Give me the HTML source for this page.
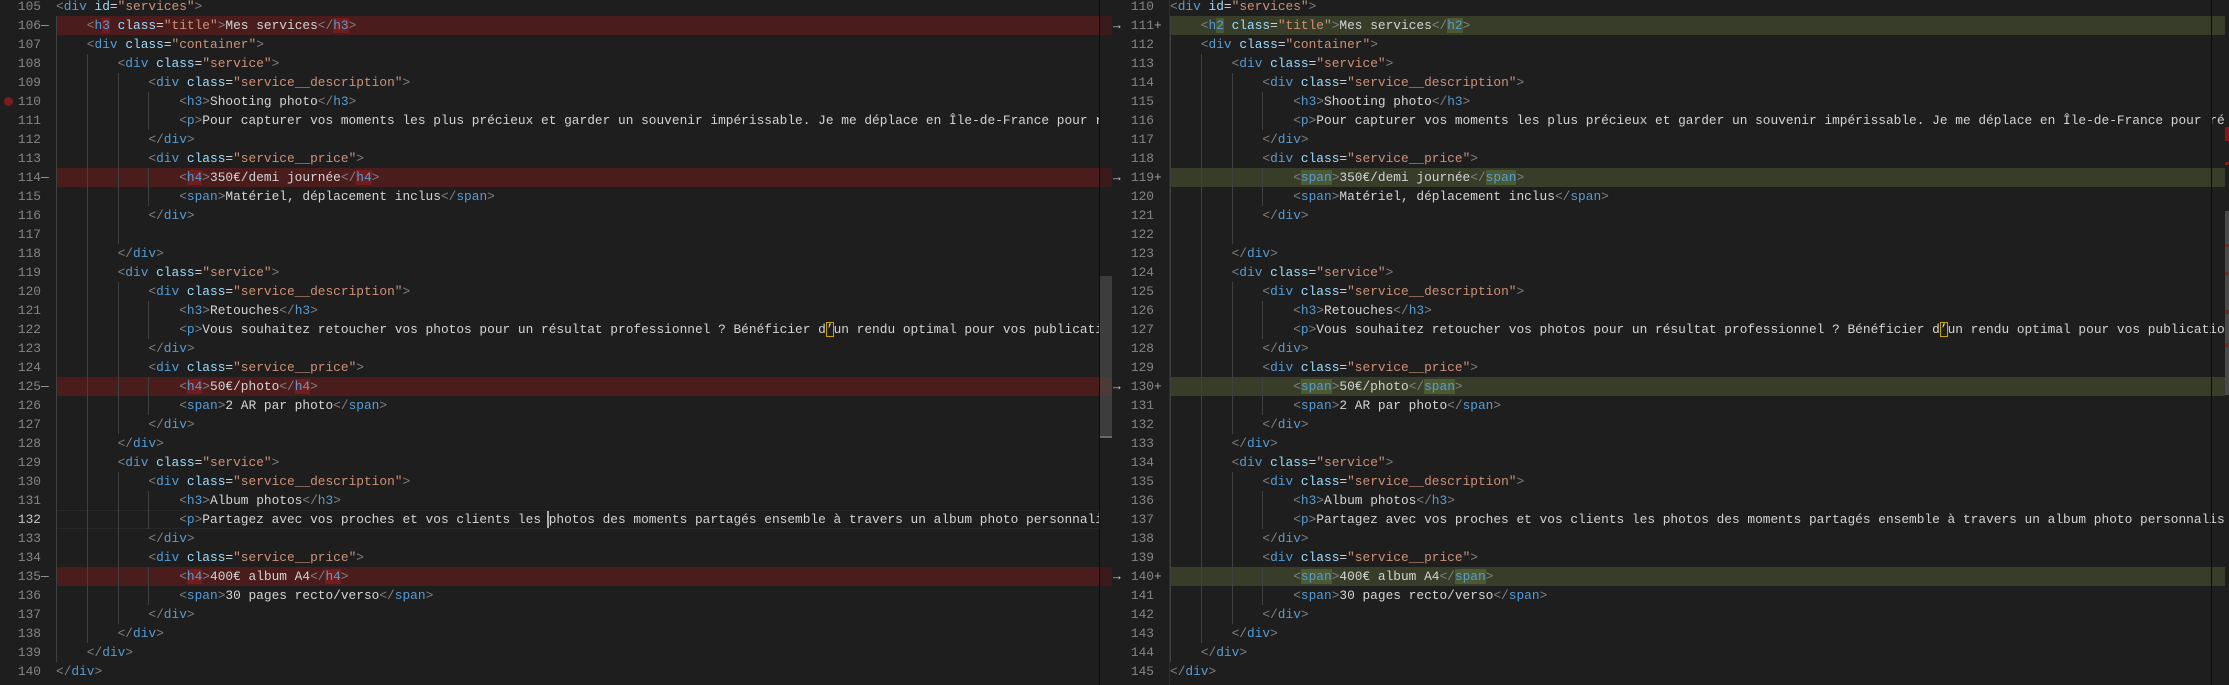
<!DOCTYPE html>
<html><head><meta charset="utf-8"><style>
html,body{margin:0;padding:0;background:#1e1e1e;width:2229px;height:685px;overflow:hidden}
body{position:relative;font-family:"Liberation Mono",monospace;font-size:12.83px;color:#d4d4d4}
.pane{position:absolute;top:0;height:685px;overflow:hidden}
.l{position:absolute;left:0;right:0;height:19px;line-height:19px;white-space:pre}
.num{position:absolute;top:0;color:#858585;text-align:right}
.code{position:absolute;top:0;white-space:pre}
i{display:inline-block;width:30.8px;height:19px;vertical-align:top;box-shadow:inset 1px 0 0 #404040}
.p{color:#808080}.n{color:#569cd6}.a{color:#9cdcfe}.s{color:#ce9178}
.del{background:#4b1c1c}
.ins{background:#373d29}
.del u{text-decoration:none;background:#6f1d1d}
.ins u{text-decoration:none;background:#4b5a32}
.mk{position:absolute;top:0;color:#a0a0a0}
.q{outline:1px solid #c5a300;outline-offset:-1px}
#L .num{left:0;width:41px}
#L .code{left:56px}
#R .num{left:0;width:42px}
#R .code{left:58px}
</style></head><body>
<div class="pane" id="L" style="left:0;width:1099px">
<div class="l" style="top:-3px"><span class="num">105</span><span class="code"><span class="p">&lt;</span><span class="n">div</span> <span class="a">id</span>=<span class="s">"services"</span><span class="p">&gt;</span></span></div>
<div class="l" style="top:16px"><div class="del" style="position:absolute;left:56px;right:0;top:0;height:19px"></div><span class="num">106</span><span class="mk" style="left:41px">—</span><span class="code del"><i></i><span class="p">&lt;</span><span class="n">h<u>3</u></span> <span class="a">class</span>=<span class="s">"title"</span><span class="p">&gt;</span>Mes services<span class="p">&lt;/</span><span class="n"><u>h3</u></span><span class="p">&gt;</span></span></div>
<div class="l" style="top:35px"><span class="num">107</span><span class="code"><i></i><span class="p">&lt;</span><span class="n">div</span> <span class="a">class</span>=<span class="s">"container"</span><span class="p">&gt;</span></span></div>
<div class="l" style="top:54px"><span class="num">108</span><span class="code"><i></i><i></i><span class="p">&lt;</span><span class="n">div</span> <span class="a">class</span>=<span class="s">"service"</span><span class="p">&gt;</span></span></div>
<div class="l" style="top:73px"><span class="num">109</span><span class="code"><i></i><i></i><i></i><span class="p">&lt;</span><span class="n">div</span> <span class="a">class</span>=<span class="s">"service__description"</span><span class="p">&gt;</span></span></div>
<div class="l" style="top:92px"><span style="position:absolute;left:4px;top:5px;width:9px;height:9px;border-radius:50%;background:#7a1d1d"></span><span class="num">110</span><span class="code"><i></i><i></i><i></i><i></i><span class="p">&lt;</span><span class="n">h3</span><span class="p">&gt;</span>Shooting photo<span class="p">&lt;/</span><span class="n">h3</span><span class="p">&gt;</span></span></div>
<div class="l" style="top:111px"><span class="num">111</span><span class="code"><i></i><i></i><i></i><i></i><span class="p">&lt;</span><span class="n">p</span><span class="p">&gt;</span>Pour capturer vos moments les plus précieux et garder un souvenir impérissable. Je me déplace en Île-de-France pour réaliser vos photos.</span></div>
<div class="l" style="top:130px"><span class="num">112</span><span class="code"><i></i><i></i><i></i><span class="p">&lt;/</span><span class="n">div</span><span class="p">&gt;</span></span></div>
<div class="l" style="top:149px"><span class="num">113</span><span class="code"><i></i><i></i><i></i><span class="p">&lt;</span><span class="n">div</span> <span class="a">class</span>=<span class="s">"service__price"</span><span class="p">&gt;</span></span></div>
<div class="l" style="top:168px"><div class="del" style="position:absolute;left:56px;right:0;top:0;height:19px"></div><span class="num">114</span><span class="mk" style="left:41px">—</span><span class="code del"><i></i><i></i><i></i><i></i><span class="p">&lt;</span><span class="n"><u>h4</u></span><span class="p">&gt;</span>350€/demi journée<span class="p">&lt;/</span><span class="n"><u>h4</u></span><span class="p">&gt;</span></span></div>
<div class="l" style="top:187px"><span class="num">115</span><span class="code"><i></i><i></i><i></i><i></i><span class="p">&lt;</span><span class="n">span</span><span class="p">&gt;</span>Matériel, déplacement inclus<span class="p">&lt;/</span><span class="n">span</span><span class="p">&gt;</span></span></div>
<div class="l" style="top:206px"><span class="num">116</span><span class="code"><i></i><i></i><i></i><span class="p">&lt;/</span><span class="n">div</span><span class="p">&gt;</span></span></div>
<div class="l" style="top:225px"><span class="num">117</span><span class="code"><i></i><i></i><i></i></span></div>
<div class="l" style="top:244px"><span class="num">118</span><span class="code"><i></i><i></i><span class="p">&lt;/</span><span class="n">div</span><span class="p">&gt;</span></span></div>
<div class="l" style="top:263px"><span class="num">119</span><span class="code"><i></i><i></i><span class="p">&lt;</span><span class="n">div</span> <span class="a">class</span>=<span class="s">"service"</span><span class="p">&gt;</span></span></div>
<div class="l" style="top:282px"><span class="num">120</span><span class="code"><i></i><i></i><i></i><span class="p">&lt;</span><span class="n">div</span> <span class="a">class</span>=<span class="s">"service__description"</span><span class="p">&gt;</span></span></div>
<div class="l" style="top:301px"><span class="num">121</span><span class="code"><i></i><i></i><i></i><i></i><span class="p">&lt;</span><span class="n">h3</span><span class="p">&gt;</span>Retouches<span class="p">&lt;/</span><span class="n">h3</span><span class="p">&gt;</span></span></div>
<div class="l" style="top:320px"><span class="num">122</span><span class="code"><i></i><i></i><i></i><i></i><span class="p">&lt;</span><span class="n">p</span><span class="p">&gt;</span>Vous souhaitez retoucher vos photos pour un résultat professionnel ? Bénéficier d<span class="q">’</span>un rendu optimal pour vos publications.</span></div>
<div class="l" style="top:339px"><span class="num">123</span><span class="code"><i></i><i></i><i></i><span class="p">&lt;/</span><span class="n">div</span><span class="p">&gt;</span></span></div>
<div class="l" style="top:358px"><span class="num">124</span><span class="code"><i></i><i></i><i></i><span class="p">&lt;</span><span class="n">div</span> <span class="a">class</span>=<span class="s">"service__price"</span><span class="p">&gt;</span></span></div>
<div class="l" style="top:377px"><div class="del" style="position:absolute;left:56px;right:0;top:0;height:19px"></div><span class="num">125</span><span class="mk" style="left:41px">—</span><span class="code del"><i></i><i></i><i></i><i></i><span class="p">&lt;</span><span class="n"><u>h4</u></span><span class="p">&gt;</span>50€/photo<span class="p">&lt;/</span><span class="n"><u>h4</u></span><span class="p">&gt;</span></span></div>
<div class="l" style="top:396px"><span class="num">126</span><span class="code"><i></i><i></i><i></i><i></i><span class="p">&lt;</span><span class="n">span</span><span class="p">&gt;</span>2 AR par photo<span class="p">&lt;/</span><span class="n">span</span><span class="p">&gt;</span></span></div>
<div class="l" style="top:415px"><span class="num">127</span><span class="code"><i></i><i></i><i></i><span class="p">&lt;/</span><span class="n">div</span><span class="p">&gt;</span></span></div>
<div class="l" style="top:434px"><span class="num">128</span><span class="code"><i></i><i></i><span class="p">&lt;/</span><span class="n">div</span><span class="p">&gt;</span></span></div>
<div class="l" style="top:453px"><span class="num">129</span><span class="code"><i></i><i></i><span class="p">&lt;</span><span class="n">div</span> <span class="a">class</span>=<span class="s">"service"</span><span class="p">&gt;</span></span></div>
<div class="l" style="top:472px"><span class="num">130</span><span class="code"><i></i><i></i><i></i><span class="p">&lt;</span><span class="n">div</span> <span class="a">class</span>=<span class="s">"service__description"</span><span class="p">&gt;</span></span></div>
<div class="l" style="top:491px"><span class="num">131</span><span class="code"><i></i><i></i><i></i><i></i><span class="p">&lt;</span><span class="n">h3</span><span class="p">&gt;</span>Album photos<span class="p">&lt;/</span><span class="n">h3</span><span class="p">&gt;</span></span></div>
<div class="l" style="top:510px"><div style="position:absolute;left:56px;right:0;top:0;height:17px;border:1px solid #282828"></div><span class="num" style="color:#c6c6c6">132</span><span class="code"><i></i><i></i><i></i><i></i><span class="p">&lt;</span><span class="n">p</span><span class="p">&gt;</span>Partagez avec vos proches et vos clients les photos des moments partagés ensemble à travers un album photo personnalisé.</span><span style="position:absolute;left:547px;top:1px;width:2px;height:17px;background:#aeafad"></span></div>
<div class="l" style="top:529px"><span class="num">133</span><span class="code"><i></i><i></i><i></i><span class="p">&lt;/</span><span class="n">div</span><span class="p">&gt;</span></span></div>
<div class="l" style="top:548px"><span class="num">134</span><span class="code"><i></i><i></i><i></i><span class="p">&lt;</span><span class="n">div</span> <span class="a">class</span>=<span class="s">"service__price"</span><span class="p">&gt;</span></span></div>
<div class="l" style="top:567px"><div class="del" style="position:absolute;left:56px;right:0;top:0;height:19px"></div><span class="num">135</span><span class="mk" style="left:41px">—</span><span class="code del"><i></i><i></i><i></i><i></i><span class="p">&lt;</span><span class="n"><u>h4</u></span><span class="p">&gt;</span>400€ album A4<span class="p">&lt;/</span><span class="n"><u>h4</u></span><span class="p">&gt;</span></span></div>
<div class="l" style="top:586px"><span class="num">136</span><span class="code"><i></i><i></i><i></i><i></i><span class="p">&lt;</span><span class="n">span</span><span class="p">&gt;</span>30 pages recto/verso<span class="p">&lt;/</span><span class="n">span</span><span class="p">&gt;</span></span></div>
<div class="l" style="top:605px"><span class="num">137</span><span class="code"><i></i><i></i><i></i><span class="p">&lt;/</span><span class="n">div</span><span class="p">&gt;</span></span></div>
<div class="l" style="top:624px"><span class="num">138</span><span class="code"><i></i><i></i><span class="p">&lt;/</span><span class="n">div</span><span class="p">&gt;</span></span></div>
<div class="l" style="top:643px"><span class="num">139</span><span class="code"><i></i><span class="p">&lt;/</span><span class="n">div</span><span class="p">&gt;</span></span></div>
<div class="l" style="top:662px"><span class="num">140</span><span class="code"><span class="p">&lt;/</span><span class="n">div</span><span class="p">&gt;</span></span></div>
</div>
<!-- left scrollbar / divider -->
<div style="position:absolute;left:1099px;top:0;width:1px;height:685px;background:#0c0c0c"></div>
<div style="position:absolute;left:1100px;top:16px;width:12px;height:19px;background:#3a1a1a"></div>
<div style="position:absolute;left:1100px;top:168px;width:12px;height:19px;background:#3a1a1a"></div>
<div style="position:absolute;left:1100px;top:377px;width:12px;height:19px;background:#3a1a1a"></div>
<div style="position:absolute;left:1100px;top:567px;width:12px;height:19px;background:#3a1a1a"></div>
<div style="position:absolute;left:1100px;top:276px;width:12px;height:161px;background:rgba(121,121,121,0.35)"></div>
<div style="position:absolute;left:1100px;top:436px;width:12px;height:2px;background:#6a6a6a"></div>

<div class="pane" id="R" style="left:1112px;width:1113px">
<div class="l" style="top:-3px"><span class="num">110</span><span class="code"><span class="p">&lt;</span><span class="n">div</span> <span class="a">id</span>=<span class="s">"services"</span><span class="p">&gt;</span></span></div>
<div class="l" style="top:16px"><div class="ins" style="position:absolute;left:58px;right:0;top:0;height:19px"></div><span class="mk" style="left:1px;color:#ccc">→</span><span class="num">111</span><span class="mk" style="left:42px">+</span><span class="code ins"><i></i><span class="p">&lt;</span><span class="n">h<u>2</u></span> <span class="a">class</span>=<span class="s">"title"</span><span class="p">&gt;</span>Mes services<span class="p">&lt;/</span><span class="n"><u>h2</u></span><span class="p">&gt;</span></span></div>
<div class="l" style="top:35px"><span class="num">112</span><span class="code"><i></i><span class="p">&lt;</span><span class="n">div</span> <span class="a">class</span>=<span class="s">"container"</span><span class="p">&gt;</span></span></div>
<div class="l" style="top:54px"><span class="num">113</span><span class="code"><i></i><i></i><span class="p">&lt;</span><span class="n">div</span> <span class="a">class</span>=<span class="s">"service"</span><span class="p">&gt;</span></span></div>
<div class="l" style="top:73px"><span class="num">114</span><span class="code"><i></i><i></i><i></i><span class="p">&lt;</span><span class="n">div</span> <span class="a">class</span>=<span class="s">"service__description"</span><span class="p">&gt;</span></span></div>
<div class="l" style="top:92px"><span class="num">115</span><span class="code"><i></i><i></i><i></i><i></i><span class="p">&lt;</span><span class="n">h3</span><span class="p">&gt;</span>Shooting photo<span class="p">&lt;/</span><span class="n">h3</span><span class="p">&gt;</span></span></div>
<div class="l" style="top:111px"><span class="num">116</span><span class="code"><i></i><i></i><i></i><i></i><span class="p">&lt;</span><span class="n">p</span><span class="p">&gt;</span>Pour capturer vos moments les plus précieux et garder un souvenir impérissable. Je me déplace en Île-de-France pour réaliser vos photos.</span></div>
<div class="l" style="top:130px"><span class="num">117</span><span class="code"><i></i><i></i><i></i><span class="p">&lt;/</span><span class="n">div</span><span class="p">&gt;</span></span></div>
<div class="l" style="top:149px"><span class="num">118</span><span class="code"><i></i><i></i><i></i><span class="p">&lt;</span><span class="n">div</span> <span class="a">class</span>=<span class="s">"service__price"</span><span class="p">&gt;</span></span></div>
<div class="l" style="top:168px"><div class="ins" style="position:absolute;left:58px;right:0;top:0;height:19px"></div><span class="mk" style="left:1px;color:#ccc">→</span><span class="num">119</span><span class="mk" style="left:42px">+</span><span class="code ins"><i></i><i></i><i></i><i></i><span class="p">&lt;</span><span class="n"><u>span</u></span><span class="p">&gt;</span>350€/demi journée<span class="p">&lt;/</span><span class="n"><u>span</u></span><span class="p">&gt;</span></span></div>
<div class="l" style="top:187px"><span class="num">120</span><span class="code"><i></i><i></i><i></i><i></i><span class="p">&lt;</span><span class="n">span</span><span class="p">&gt;</span>Matériel, déplacement inclus<span class="p">&lt;/</span><span class="n">span</span><span class="p">&gt;</span></span></div>
<div class="l" style="top:206px"><span class="num">121</span><span class="code"><i></i><i></i><i></i><span class="p">&lt;/</span><span class="n">div</span><span class="p">&gt;</span></span></div>
<div class="l" style="top:225px"><span class="num">122</span><span class="code"><i></i><i></i><i></i></span></div>
<div class="l" style="top:244px"><span class="num">123</span><span class="code"><i></i><i></i><span class="p">&lt;/</span><span class="n">div</span><span class="p">&gt;</span></span></div>
<div class="l" style="top:263px"><span class="num">124</span><span class="code"><i></i><i></i><span class="p">&lt;</span><span class="n">div</span> <span class="a">class</span>=<span class="s">"service"</span><span class="p">&gt;</span></span></div>
<div class="l" style="top:282px"><span class="num">125</span><span class="code"><i></i><i></i><i></i><span class="p">&lt;</span><span class="n">div</span> <span class="a">class</span>=<span class="s">"service__description"</span><span class="p">&gt;</span></span></div>
<div class="l" style="top:301px"><span class="num">126</span><span class="code"><i></i><i></i><i></i><i></i><span class="p">&lt;</span><span class="n">h3</span><span class="p">&gt;</span>Retouches<span class="p">&lt;/</span><span class="n">h3</span><span class="p">&gt;</span></span></div>
<div class="l" style="top:320px"><span class="num">127</span><span class="code"><i></i><i></i><i></i><i></i><span class="p">&lt;</span><span class="n">p</span><span class="p">&gt;</span>Vous souhaitez retoucher vos photos pour un résultat professionnel ? Bénéficier d<span class="q">’</span>un rendu optimal pour vos publications.</span></div>
<div class="l" style="top:339px"><span class="num">128</span><span class="code"><i></i><i></i><i></i><span class="p">&lt;/</span><span class="n">div</span><span class="p">&gt;</span></span></div>
<div class="l" style="top:358px"><span class="num">129</span><span class="code"><i></i><i></i><i></i><span class="p">&lt;</span><span class="n">div</span> <span class="a">class</span>=<span class="s">"service__price"</span><span class="p">&gt;</span></span></div>
<div class="l" style="top:377px"><div class="ins" style="position:absolute;left:58px;right:0;top:0;height:19px"></div><span class="mk" style="left:1px;color:#ccc">→</span><span class="num">130</span><span class="mk" style="left:42px">+</span><span class="code ins"><i></i><i></i><i></i><i></i><span class="p">&lt;</span><span class="n"><u>span</u></span><span class="p">&gt;</span>50€/photo<span class="p">&lt;/</span><span class="n"><u>span</u></span><span class="p">&gt;</span></span></div>
<div class="l" style="top:396px"><span class="num">131</span><span class="code"><i></i><i></i><i></i><i></i><span class="p">&lt;</span><span class="n">span</span><span class="p">&gt;</span>2 AR par photo<span class="p">&lt;/</span><span class="n">span</span><span class="p">&gt;</span></span></div>
<div class="l" style="top:415px"><span class="num">132</span><span class="code"><i></i><i></i><i></i><span class="p">&lt;/</span><span class="n">div</span><span class="p">&gt;</span></span></div>
<div class="l" style="top:434px"><span class="num">133</span><span class="code"><i></i><i></i><span class="p">&lt;/</span><span class="n">div</span><span class="p">&gt;</span></span></div>
<div class="l" style="top:453px"><span class="num">134</span><span class="code"><i></i><i></i><span class="p">&lt;</span><span class="n">div</span> <span class="a">class</span>=<span class="s">"service"</span><span class="p">&gt;</span></span></div>
<div class="l" style="top:472px"><span class="num">135</span><span class="code"><i></i><i></i><i></i><span class="p">&lt;</span><span class="n">div</span> <span class="a">class</span>=<span class="s">"service__description"</span><span class="p">&gt;</span></span></div>
<div class="l" style="top:491px"><span class="num">136</span><span class="code"><i></i><i></i><i></i><i></i><span class="p">&lt;</span><span class="n">h3</span><span class="p">&gt;</span>Album photos<span class="p">&lt;/</span><span class="n">h3</span><span class="p">&gt;</span></span></div>
<div class="l" style="top:510px"><span class="num">137</span><span class="code"><i></i><i></i><i></i><i></i><span class="p">&lt;</span><span class="n">p</span><span class="p">&gt;</span>Partagez avec vos proches et vos clients les photos des moments partagés ensemble à travers un album photo personnalisé.</span></div>
<div class="l" style="top:529px"><span class="num">138</span><span class="code"><i></i><i></i><i></i><span class="p">&lt;/</span><span class="n">div</span><span class="p">&gt;</span></span></div>
<div class="l" style="top:548px"><span class="num">139</span><span class="code"><i></i><i></i><i></i><span class="p">&lt;</span><span class="n">div</span> <span class="a">class</span>=<span class="s">"service__price"</span><span class="p">&gt;</span></span></div>
<div class="l" style="top:567px"><div class="ins" style="position:absolute;left:58px;right:0;top:0;height:19px"></div><span class="mk" style="left:1px;color:#ccc">→</span><span class="num">140</span><span class="mk" style="left:42px">+</span><span class="code ins"><i></i><i></i><i></i><i></i><span class="p">&lt;</span><span class="n"><u>span</u></span><span class="p">&gt;</span>400€ album A4<span class="p">&lt;/</span><span class="n"><u>span</u></span><span class="p">&gt;</span></span></div>
<div class="l" style="top:586px"><span class="num">141</span><span class="code"><i></i><i></i><i></i><i></i><span class="p">&lt;</span><span class="n">span</span><span class="p">&gt;</span>30 pages recto/verso<span class="p">&lt;/</span><span class="n">span</span><span class="p">&gt;</span></span></div>
<div class="l" style="top:605px"><span class="num">142</span><span class="code"><i></i><i></i><i></i><span class="p">&lt;/</span><span class="n">div</span><span class="p">&gt;</span></span></div>
<div class="l" style="top:624px"><span class="num">143</span><span class="code"><i></i><i></i><span class="p">&lt;/</span><span class="n">div</span><span class="p">&gt;</span></span></div>
<div class="l" style="top:643px"><span class="num">144</span><span class="code"><i></i><span class="p">&lt;/</span><span class="n">div</span><span class="p">&gt;</span></span></div>
<div class="l" style="top:662px"><span class="num">145</span><span class="code"><span class="p">&lt;/</span><span class="n">div</span><span class="p">&gt;</span></span></div>
</div>
<div style="position:absolute;left:1169px;top:0;width:1px;height:685px;background:#2e2e2e"></div>
<!-- right edge -->
<div style="position:absolute;left:2211px;top:0;width:1px;height:685px;background:#0c0c0c"></div>
<div style="position:absolute;left:2225px;top:0;width:4px;height:685px;background:#1e1e1e"></div>
<div style="position:absolute;left:2225px;top:211px;width:4px;height:184px;background:#4a4a4a"></div>
<div style="position:absolute;left:2225px;top:127px;width:4px;height:14px;background:#8a1515"></div>
<div style="position:absolute;left:2225px;top:162px;width:4px;height:3px;background:#8a1515"></div>
<div style="position:absolute;left:2225px;top:244px;width:4px;height:3px;background:#6a2a2a"></div>
<div style="position:absolute;left:2225px;top:272px;width:4px;height:3px;background:#6a2a2a"></div>
<div style="position:absolute;left:2225px;top:310px;width:4px;height:4px;background:#6a2a2a"></div>
<div style="position:absolute;left:2225px;top:343px;width:4px;height:4px;background:#6a2a2a"></div>
</body></html>
